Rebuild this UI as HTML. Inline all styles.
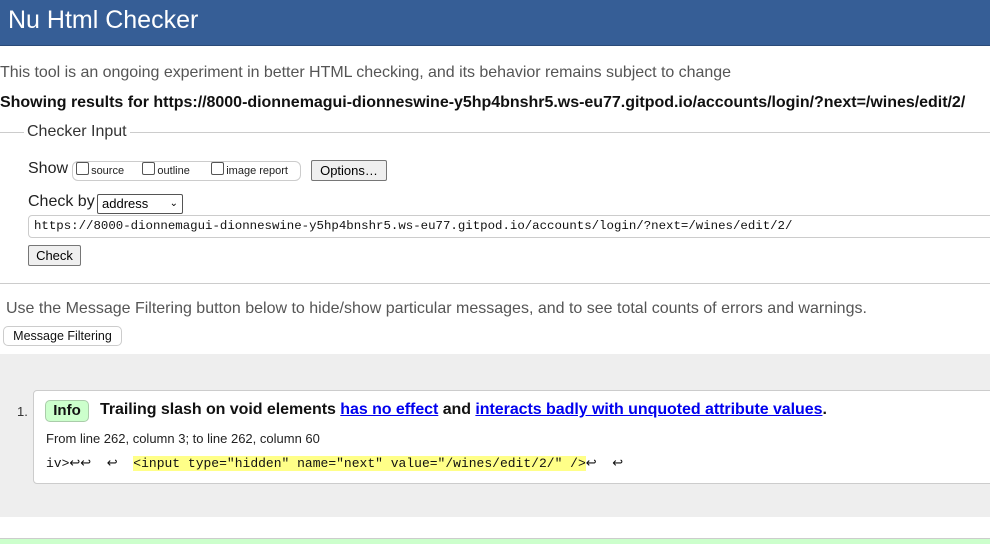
<!DOCTYPE html>
<html><head><style>
body{margin:0;width:990px;height:543px;overflow:hidden;font-family:"Liberation Sans",sans-serif;background:#fff;position:relative}
.a{position:absolute;white-space:nowrap}
.mono{font-family:"Liberation Mono",monospace}
.btn{position:absolute;background:#efefef;border:1px solid #767676;border-radius:2px;font-size:13px;box-sizing:border-box;text-align:center}
.cb{display:inline-block;width:11px;height:11px;border:1px solid #555;border-radius:2px;vertical-align:-1px;margin-right:2px;background:#fff}
a{color:#00e;text-decoration:underline}
</style></head><body>
<div class="a" style="left:0;top:0;width:990px;height:45px;background:#365e96;border-bottom:1px solid #2a4a78"></div>
<div class="a" style="left:8px;top:6px;font-size:25px;color:#fff">Nu Html Checker</div>
<div class="a" style="left:0;top:64px;font-size:16px;color:#555;letter-spacing:-0.03px">This tool is an ongoing experiment in better HTML checking, and its behavior remains subject to change</div>
<div class="a" style="left:0;top:94px;font-size:16px;font-weight:bold;color:#111;letter-spacing:-0.02px">Showing results for https://8000-dionnemagui-dionneswine-y5hp4bnshr5.ws-eu77.gitpod.io/accounts/login/?next=/wines/edit/2/</div>
<div class="a" style="left:0;top:132px;width:990px;border-top:1px solid #ccc"></div>
<div class="a" style="left:24px;top:123px;font-size:16px;color:#333;background:#fff;padding:0 3px">Checker Input</div>
<div class="a" style="left:28px;top:160px;font-size:16px;color:#222">Show</div>
<div class="a" style="left:72px;top:161px;width:227px;height:18px;border:1px solid #ccc;border-radius:6px;font-size:11px;color:#222;line-height:18px">&nbsp;<span class="cb"></span>source &nbsp;&nbsp;&nbsp;&nbsp;&nbsp;<span class="cb"></span>outline &nbsp;&nbsp;&nbsp;&nbsp;&nbsp;&nbsp;<span class="cb"></span>image report</div>
<div class="btn" style="left:311px;top:160px;width:76px;height:21px;line-height:19px">Options…</div>
<div class="a" style="left:28px;top:193px;font-size:16px;color:#222">Check by</div>
<div class="a" style="left:97px;top:194px;height:18px;border:1px solid #555;border-radius:2px;font-size:13px;line-height:18px;padding-left:4px;width:80px">address<span style="position:absolute;right:4px;font-size:10px">⌄</span></div>
<div class="a mono" style="left:28px;top:215px;width:970px;height:21px;border:1px solid #ccc;border-radius:4px;font-size:12.4px;line-height:21px;padding-left:5px;color:#111">https://8000-dionnemagui-dionneswine-y5hp4bnshr5.ws-eu77.gitpod.io/accounts/login/?next=/wines/edit/2/</div>
<div class="btn" style="left:28px;top:245px;width:53px;height:21px;line-height:19px">Check</div>
<div class="a" style="left:0;top:283px;width:990px;border-top:1px solid #ccc"></div>
<div class="a" style="left:6px;top:300px;font-size:16px;color:#555">Use the Message Filtering button below to hide/show particular messages, and to see total counts of errors and warnings.</div>
<div class="a" style="left:3px;top:326px;width:117px;height:18px;border:1px solid #ccc;border-radius:5px;font-size:12.5px;line-height:18px;text-align:center;color:#111">Message Filtering</div>
<div class="a" style="left:0;top:354px;width:990px;height:163px;background:#eee"></div>
<div class="a" style="left:17px;top:404px;font-size:13px;color:#333">1.</div>
<div class="a" style="left:33px;top:390px;width:970px;height:92px;background:#fff;border:1px solid #ccc;border-radius:4px"></div>
<div class="a" style="left:45px;top:400px;width:42px;height:20px;background:#cfc;border:1px solid #aca;border-radius:5px;font-size:15px;font-weight:bold;line-height:20px;text-align:center;color:#111">Info</div>
<div class="a" style="left:100px;top:401px;font-size:16px;font-weight:bold;color:#111;letter-spacing:-0.05px">Trailing slash on void elements <a href="#">has no effect</a> and <a href="#">interacts badly with unquoted attribute values</a>.</div>
<div class="a" style="left:46px;top:431px;font-size:13px;color:#222">From line 262, column 3; to line 262, column 60</div>
<div class="a mono" style="left:46px;top:456px;font-size:13px;color:#111">iv>↩↩ &nbsp;↩ &nbsp;<span style="background:#ff8">&lt;input type="hidden" name="next" value="/wines/edit/2/" /&gt;</span>↩ &nbsp;↩</div>
<div class="a" style="left:0;top:538px;width:990px;height:5px;background:#cfc;border-top:1px solid #ccc"></div>
</body></html>
